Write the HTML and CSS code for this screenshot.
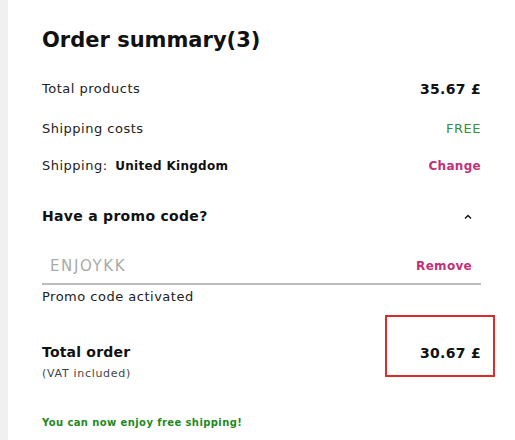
FILE: index.html
```html
<!DOCTYPE html>
<html lang="en">
	<head>
		<meta charset="UTF-8" />
		<meta name="viewport" content="width=device-width, initial-scale=1.0" />
		<title>Order summary</title>
		<link rel="stylesheet" href="styles.css">
	</head>
	<body>
		<div class="summary">
			<h2 class="title">Order summary(3)</h2>

			<div class="row row-first">
				<span>Total products</span>
				<span class="amount">35.67 £</span>
			</div>
			<div class="row">
				<span>Shipping costs</span>
				<span class="free">FREE</span>
			</div>
			<div class="row row-tight">
				<span>Shipping: <b class="country">United Kingdom</b></span>
				<a class="link" href="#">Change</a>
			</div>

			<div class="promo-head">
				<span>Have a promo code?</span>
				<svg class="chevron" width="8" height="5" viewBox="0 0 8 5">
					<path d="M1 4.5 L4 1.5 L7 4.5" fill="none" stroke="#111" stroke-width="1.4" />
				</svg>
			</div>
			<div class="promo-field">
				<span class="code">ENJOYKK</span>
				<a class="link" href="#">Remove</a>
			</div>
			<div class="promo-note">Promo code activated</div>

			<div class="total">
				<div class="total-label">
					<div class="total-title">Total order</div>
					<div class="vat">(VAT included)</div>
				</div>
				<div class="total-price">30.67 £</div>
			</div>

			<div class="shipping-note">You can now enjoy free shipping!</div>
		</div>
	</body>
</html>
```

FILE: styles.css
```css
* {
	box-sizing: border-box;
}
body {
	margin: 0;
	background: #f0f0f0;
	font-family: "DejaVu Sans", Arial, sans-serif;
	color: #222;
}
.summary {
	margin-left: 8px;
	min-height: 440px;
	background: #fff;
	padding: 26px 34px 0 34px;
	width: 507px;
}
.title {
	margin: 0;
	font-size: 21px;
	line-height: 28px;
	font-weight: 700;
	color: #111;
}
.row {
	display: flex;
	justify-content: space-between;
	align-items: center;
	font-size: 13px;
	line-height: 20px;
	letter-spacing: 0.5px;
	margin-top: 20px;
}
.row-first {
	margin-top: 25px;
}
.row-tight {
	margin-top: 17px;
}
.amount {
	font-weight: 700;
	font-size: 14px;
	letter-spacing: 0.3px;
	color: #111;
}
.free {
	color: #3b8f3b;
}
.country {
	margin-left: 3px;
	color: #111;
	font-size: 12px;
	letter-spacing: 0.3px;
}
.link {
	color: #c2307a;
	font-weight: 700;
	text-decoration: none;
	font-size: 12px;
	letter-spacing: 0.3px;
}
.promo-head {
	display: flex;
	justify-content: space-between;
	align-items: center;
	margin-top: 29px;
	font-size: 14px;
	line-height: 22px;
	letter-spacing: 0.3px;
	font-weight: 700;
	color: #111;
}
.chevron {
	margin-right: 9px;
}
.promo-field {
	display: flex;
	justify-content: space-between;
	align-items: center;
	margin-top: 24px;
	height: 34px;
	padding: 0 9px 2px 8px;
	border-bottom: 2px solid #bdbdbd;
}
.code {
	color: #aaa;
	font-size: 15px;
	letter-spacing: 1.6px;
}
.promo-note {
	margin-top: 2px;
	font-size: 13px;
	line-height: 20px;
	letter-spacing: 0.5px;
}
.total {
	display: flex;
	justify-content: space-between;
	align-items: flex-start;
	margin-top: 8px;
}
.total-label {
	margin-top: 27px;
}
.total-title {
	font-size: 14px;
	line-height: 20px;
	letter-spacing: 0.2px;
	font-weight: 700;
	color: #111;
}
.vat {
	margin-top: 4px;
	font-size: 11px;
	line-height: 16px;
	letter-spacing: 0.7px;
	color: #444;
}
.total-price {
	width: 110px;
	height: 62px;
	margin-right: -14px;
	padding: 26px 12px 0 0;
	border: 2px solid #dd2a2a;
	text-align: right;
	font-size: 14px;
	line-height: 20px;
	letter-spacing: 0.3px;
	font-weight: 700;
	color: #111;
}
.shipping-note {
	margin-top: 33px;
	font-size: 10px;
	line-height: 16px;
	letter-spacing: 0.4px;
	font-weight: 700;
	color: #1e8a1e;
}
```
